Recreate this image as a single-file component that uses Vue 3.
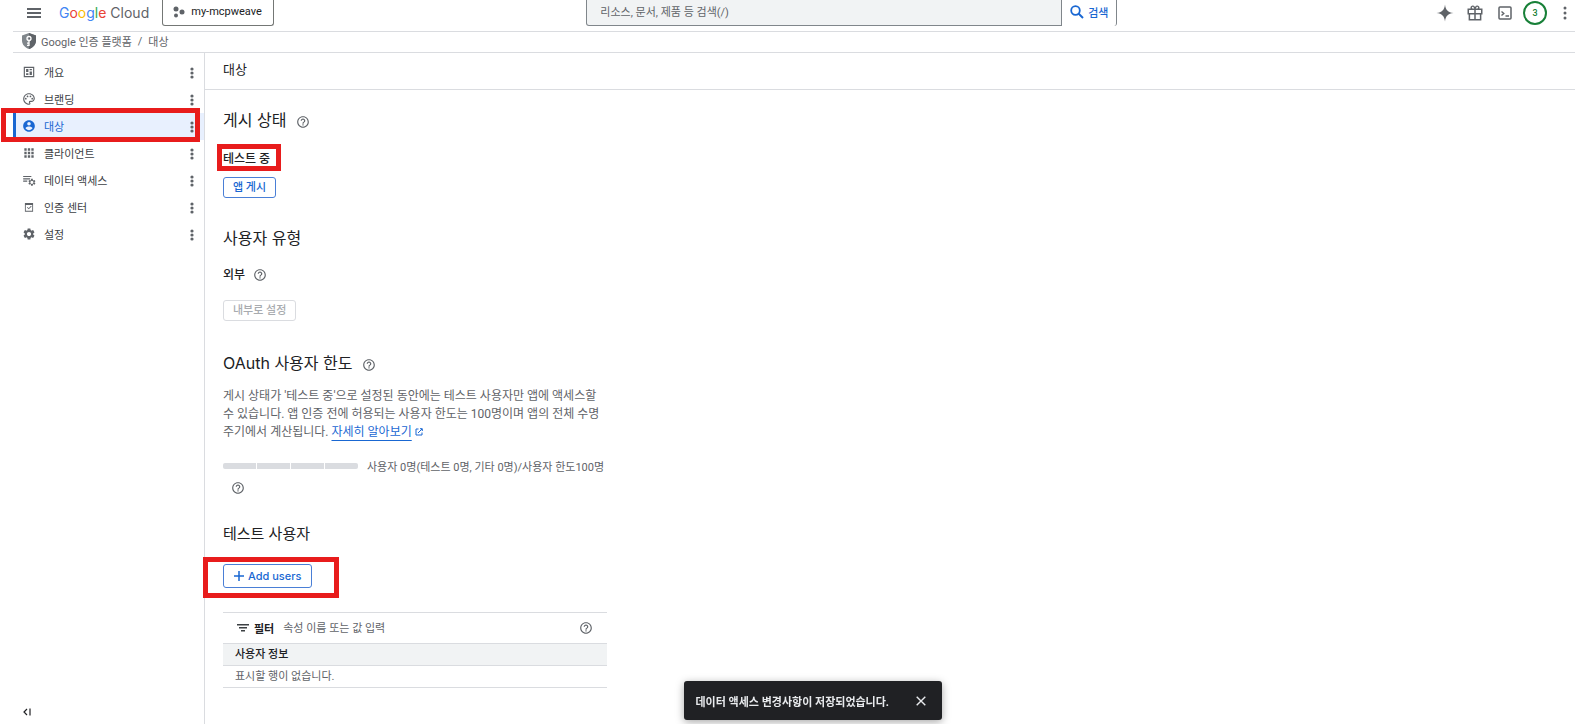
<script setup>
import { ref } from 'vue'

const search = ref('')
const filter = ref('')
const showToast = ref(true)

const helpPath =
  'M11 18h2v-2h-2v2zm1-16C6.48 2 2 6.48 2 12s4.48 10 10 10 10-4.48 10-10S17.52 2 12 2zm0 18c-4.41 0-8-3.59-8-8s3.59-8 8-8 8 3.59 8 8-3.59 8-8 8zm0-14c-2.21 0-4 1.79-4 4h2c0-1.1.9-2 2-2s2 .9 2 2c0 2-3 1.75-3 5h2c0-2.25 3-2.5 3-5 0-2.21-1.79-4-4-4z'

const menu = [
  {
    label: '개요',
    icon: 'M3 3h18v18H3zM5 5v14h14V5zM7 7h4v5H7zM13 7h4v2h-4zM13 11h4v6h-4zM7 14h4v3H7z',
  },
  {
    label: '브랜딩',
    icon: 'M12 22C6.49 22 2 17.51 2 12S6.49 2 12 2s10 4.04 10 9c0 3.31-2.69 6-6 6h-1.77c-.28 0-.5.22-.5.5 0 .12.05.23.13.33.41.47.64 1.06.64 1.67A2.5 2.5 0 0112 22zm0-18c-4.41 0-8 3.59-8 8s3.59 8 8 8c.28 0 .5-.22.5-.5a.54.54 0 00-.14-.35c-.41-.46-.63-1.05-.63-1.65a2.5 2.5 0 012.5-2.5H16c2.21 0 4-1.79 4-4 0-3.86-3.59-7-8-7zM5 11.500a1.500 1.500 0 1 0 3 0a1.500 1.500 0 1 0-3 0zM8 7.500a1.500 1.500 0 1 0 3 0a1.500 1.500 0 1 0-3 0zM13 7.500a1.500 1.500 0 1 0 3 0a1.500 1.500 0 1 0-3 0zM16 11.500a1.500 1.500 0 1 0 3 0a1.500 1.500 0 1 0-3 0z',
  },
  {
    label: '대상',
    active: true,
    icon: 'M12 2C6.48 2 2 6.48 2 12s4.48 10 10 10 10-4.48 10-10S17.52 2 12 2zm0 3c1.66 0 3 1.34 3 3s-1.34 3-3 3-3-1.34-3-3 1.34-3 3-3zm0 14.200c-2.500 0-4.710-1.280-6-3.220.030-1.990 4-3.080 6-3.080 1.990 0 5.970 1.090 6 3.080-1.290 1.940-3.500 3.220-6 3.220z',
  },
  {
    label: '클라이언트',
    icon: 'M4 4h4v4H4zM10 4h4v4h-4zM16 4h4v4h-4zM4 10h4v4H4zM10 10h4v4h-4zM16 10h4v4h-4zM4 16h4v4H4zM10 16h4v4h-4zM16 16h4v4h-4z',
  },
  {
    label: '데이터 액세스',
    icon: 'M2 5h14v2H2zM2 9h12v2H2zM2 13h7v2H2zM15.500 10h3v2l1.500 1 1.700-1 1.300 2.300-1.500 1.200v1l1.500 1.200-1.300 2.300-1.700-1-1.500 1v2h-3v-2l-1.500-1-1.700 1-1.300-2.300 1.500-1.200v-1l-1.500-1.200 1.300-2.300 1.700 1 1.500-1zM17 13.300a2.700 2.700 0 1 0 0 5.400a2.700 2.700 0 1 0 0-5.400z',
  },
  {
    label: '인증 센터',
    icon: 'M5 5h14v15H5zM6.500 8.500v10h11v-10zM8.500 13l1-1 2 2 4-4 1 1-5 5z',
  },
  {
    label: '설정',
    icon: 'M19.140 12.940c.040-.300.060-.610.060-.940 0-.320-.020-.640-.070-.940l2.030-1.580c.180-.140.230-.410.120-.610l-1.920-3.320c-.120-.220-.370-.290-.590-.220l-2.390.960c-.500-.380-1.030-.700-1.620-.940l-.360-2.540c-.040-.240-.240-.410-.480-.410h-3.840c-.240 0-.430.170-.470.410l-.360 2.540c-.590.240-1.130.570-1.620.940l-2.390-.960c-.220-.080-.470 0-.590.220L2.740 8.870c-.120.210-.080.470.120.610l2.030 1.580c-.050.300-.090.630-.090.940s.020.640.070.940l-2.030 1.580c-.180.140-.230.410-.120.610l1.920 3.320c.120.220.370.290.590.220l2.390-.960c.500.380 1.030.700 1.620.940l.360 2.540c.050.240.240.410.480.410h3.840c.240 0 .440-.170.470-.410l.360-2.540c.590-.240 1.130-.560 1.620-.940l2.390.960c.220.080.470 0 .590-.220l1.920-3.320c.120-.220.070-.470-.120-.610l-2.010-1.580zM12 15.600c-1.980 0-3.600-1.620-3.600-3.600s1.620-3.600 3.600-3.600 3.600 1.620 3.600 3.600-1.620 3.600-3.600 3.600z',
  },
]
</script>

<template>
  <div class="console">
    <header class="topbar">
      <div class="topbar-left">
        <button class="icon-btn" aria-label="탐색 메뉴">
          <svg width="14" height="10" viewBox="0 0 14 10"><path d="M0 0h14v2H0zM0 4h14v2H0zM0 8h14v2H0z" /></svg>
        </button>
        <a class="logo" href="#"><span class="b">G</span><span class="r">o</span><span class="y">o</span><span class="b">g</span><span class="g">l</span><span class="r">e</span> Cloud</a>
        <button class="project">
          <svg width="12" height="12" viewBox="0 0 12 12"><circle cx="3" cy="3" r="2.500" /><circle cx="9" cy="6" r="2.500" /><circle cx="3" cy="9.500" r="2" /></svg>
          my-mcpweave
        </button>
      </div>
      <form class="search" @submit.prevent>
        <input v-model="search" type="text" aria-label="검색어" placeholder="리소스, 문서, 제품 등 검색(/)" />
        <button type="submit">
          <svg width="14" height="14" viewBox="0 0 14 14"><circle cx="5.500" cy="5.500" r="4.300" fill="none" stroke="currentColor" stroke-width="1.800" /><path d="M8.500 8.500l4.500 4.500" stroke="currentColor" stroke-width="2" /></svg>
          검색
        </button>
      </form>
      <div class="topbar-right">
        <button class="tool" aria-label="Gemini">
          <svg width="18" height="18" viewBox="0 0 18 18"><path d="M9 .5c.6 5.500 3 7.900 8.500 8.500-5.500.6-7.900 3-8.500 8.500-.6-5.500-3-7.900-8.500-8.500 5.500-.6 7.900-3 8.500-8.500z" /></svg>
        </button>
        <button class="tool" aria-label="혜택">
          <svg width="18" height="18" viewBox="0 0 24 24"><path d="M20 6h-2.180c.110-.310.180-.650.180-1 0-1.660-1.340-3-3-3-1.050 0-1.960.540-2.500 1.350l-.500.670-.500-.680C10.960 2.540 10.050 2 9 2 7.340 2 6 3.340 6 5c0 .350.070.690.180 1H2v8h1.500v8h17v-8H22V6h-2zm-5-2.200c.660 0 1.200.540 1.200 1.200S15.660 6 15 6h-2l1-1.600c.2-.4.600-.6 1-.6zM9 3.800c.4 0 .8.200 1 .6L11 6H9c-.660 0-1.200-.340-1.200-1S8.340 3.800 9 3.800zM4 8h7v4H4zm1.500 6H11v6H5.500zm13 6H13v-6h5.500zM20 12h-7V8h7z" /></svg>
        </button>
        <button class="tool" aria-label="Cloud Shell">
          <svg width="14" height="14" viewBox="0 0 14 14"><rect x="1" y="1" width="12" height="12" rx="1" fill="none" stroke="currentColor" stroke-width="1.500" /><path d="M3.500 5.500l2.300 2-2.300 2M7.500 10H11" fill="none" stroke="currentColor" stroke-width="1.400" /></svg>
        </button>
        <button class="tool" aria-label="알림"><span class="badge">3</span></button>
        <button class="more" aria-label="더보기">
          <svg width="4" height="14" viewBox="0 0 4 14"><circle cx="2" cy="2" r="1.500" /><circle cx="2" cy="7" r="1.500" /><circle cx="2" cy="12" r="1.500" /></svg>
        </button>
      </div>
    </header>

    <nav class="crumbs" aria-label="이동 경로">
      <svg width="14" height="16" viewBox="0 0 14 16">
        <path d="M7 0l7 2.500v5C14 11.500 11 14.800 7 16 3 14.800 0 11.500 0 7.500v-5z" fill="#80868b" />
        <path d="M7 0l7 2.500v5C14 11.500 11 14.800 7 16z" fill="#5f6368" />
        <circle cx="7" cy="5.500" r="2" fill="none" stroke="#fff" stroke-width="1.300" />
        <path d="M7 7.500V13M7 10.200H5M7 12.300H5" stroke="#fff" stroke-width="1.300" />
      </svg>
      <a href="#">Google 인증 플랫폼</a>
      <span class="slash">/</span>
      <span>대상</span>
    </nav>

    <div class="body">
      <aside class="sidebar">
        <ul>
          <li v-for="item in menu" :key="item.label" :class="{ active: item.active }">
            <a href="#">
              <svg width="14" height="14" viewBox="0 0 24 24"><path fill-rule="evenodd" :d="item.icon" /></svg>
              {{ item.label }}
            </a>
            <button class="dots" :aria-label="item.label + ' 옵션'">
              <svg width="4" height="12" viewBox="0 0 4 12"><circle cx="2" cy="2" r="1.600" /><circle cx="2" cy="6" r="1.600" /><circle cx="2" cy="10" r="1.600" /></svg>
            </button>
            <span v-if="item.active" class="mark mark-menu"></span>
          </li>
        </ul>
        <button class="collapse" aria-label="메뉴 접기">
          <svg width="8" height="8" viewBox="0 0 8 8"><path d="M4 1L1 4l3 3M7 .5v7" fill="none" stroke="currentColor" stroke-width="1.200" /></svg>
        </button>
      </aside>

      <main>
        <h1>대상</h1>
        <div class="content">
          <section class="publish">
            <h2>게시 상태 <svg class="help" viewBox="0 0 24 24"><path :d="helpPath" /></svg></h2>
            <p class="status"><span class="marked">테스트 중<span class="mark mark-status"></span></span></p>
            <button class="btn">앱 게시</button>
          </section>

          <section class="user-type">
            <h2>사용자 유형</h2>
            <p class="status">외부 <svg class="help" viewBox="0 0 24 24"><path :d="helpPath" /></svg></p>
            <button class="btn" disabled>내부로 설정</button>
          </section>

          <section class="limit">
            <h2>OAuth 사용자 한도 <svg class="help" viewBox="0 0 24 24"><path :d="helpPath" /></svg></h2>
            <p class="desc">
              게시 상태가 '테스트 중'으로 설정된 동안에는 테스트 사용자만 앱에 액세스할 수 있습니다. 앱 인증 전에 허용되는 사용자 한도는 100명이며 앱의 전체 수명 주기에서 계산됩니다.
              <a href="#">자세히 알아보기</a><svg class="external" width="8" height="8" viewBox="0 0 8 8"><path d="M3.500 1H1v6h6V4.500M5 .7h2.300V3M7 1L3 5" fill="none" stroke="currentColor" /></svg>
            </p>
            <div class="quota">
              <div class="bar"><i v-for="n in 4" :key="n"></i></div>
              <span>사용자 0명(테스트 0명, 기타 0명)/사용자 한도100명</span>
            </div>
            <div class="quota-help"><svg class="help" viewBox="0 0 24 24"><path :d="helpPath" /></svg></div>
          </section>

          <section class="testers">
            <h3>테스트 사용자</h3>
            <div class="marked">
              <button class="btn add">
                <svg width="10" height="10" viewBox="0 0 10 10"><path d="M5 0v10M0 5h10" stroke="currentColor" stroke-width="1.500" /></svg>
                Add users
              </button>
              <span class="mark mark-add"></span>
            </div>
            <div class="filter">
              <svg width="12" height="8" viewBox="0 0 12 8"><path d="M0 0h12v1.500H0zM2 3h8v1.500H2zM4 6h4v1.500H4z" /></svg>
              <label for="filter">필터</label>
              <input id="filter" v-model="filter" type="text" placeholder="속성 이름 또는 값 입력" />
              <svg class="help" viewBox="0 0 24 24"><path :d="helpPath" /></svg>
            </div>
            <table>
              <thead>
                <tr><th>사용자 정보</th></tr>
              </thead>
              <tbody>
                <tr><td>표시할 행이 없습니다.</td></tr>
              </tbody>
            </table>
          </section>
        </div>
      </main>
    </div>

    <div v-if="showToast" class="toast" role="status">
      <span>데이터 액세스 변경사항이 저장되었습니다.</span>
      <button aria-label="닫기" @click="showToast = false">
        <svg width="10" height="10" viewBox="0 0 10 10"><path d="M.7.7l8.600 8.600M9.300.7L.7 9.300" stroke="currentColor" stroke-width="1.400" /></svg>
      </button>
    </div>
  </div>
</template>

<style>
body {
  margin: 0;
  background: #fff;
}
</style>

<style scoped>
.console {
  display: flex;
  flex-direction: column;
  box-sizing: border-box;
  min-height: 100vh;
  padding-left: 13px;
  font-family: Roboto, "Noto Sans CJK KR", sans-serif;
  font-size: 11px;
  color: #202124;
}

button,
input {
  font: inherit;
  margin: 0;
}
button {
  padding: 0;
  border: 0;
  background: none;
  color: inherit;
  cursor: pointer;
}
svg {
  display: block;
  flex: none;
  fill: currentColor;
}
h1,
h2,
h3,
p,
ul {
  margin: 0;
  padding: 0;
  font-weight: 400;
}

.topbar {
  display: flex;
  justify-content: space-between;
  align-items: flex-start;
  height: 31px;
  border-bottom: 1px solid #dadce0;
}
.topbar-left,
.topbar-right {
  display: flex;
  align-items: center;
  height: 26px;
  color: #5f6368;
}
.icon-btn {
  padding: 0 14px;
}
.logo {
  margin: 0 13px 0 4px;
  padding-bottom: 2px;
  font-family: Inter, sans-serif;
  font-size: 14px;
  color: #5f6368;
  text-decoration: none;
}
.b { color: #4285f4; }
.r { color: #ea4335; }
.y { color: #fbbc04; }
.g { color: #34a853; }
.project {
  display: flex;
  align-items: center;
  gap: 6px;
  box-sizing: border-box;
  height: 26px;
  padding: 0 11px 2px 10px;
  border: 1px solid #747775;
  border-top: 0;
  border-radius: 0 0 3px 3px;
  color: #202124;
}
.project svg {
  color: #5f6368;
}
.search {
  display: flex;
  width: 34%;
  height: 26px;
}
.search input {
  flex: 1;
  min-width: 0;
  box-sizing: border-box;
  padding: 0 13px;
  border: 1px solid #80868b;
  border-top: 0;
  border-radius: 0 0 0 3px;
  background: #f1f3f4;
  outline: none;
}
.search input::placeholder,
.filter input::placeholder {
  color: #5f6368;
  opacity: 1;
}
.search button {
  display: flex;
  align-items: center;
  gap: 4px;
  padding: 0 8px 2px;
  border-right: 1px solid #80868b;
  border-radius: 0 0 3px 0;
  color: #1967d2;
  font-weight: 500;
}
.tool {
  display: flex;
  justify-content: center;
  width: 30px;
}
.badge {
  box-sizing: border-box;
  width: 24px;
  height: 24px;
  border: 2px solid #188038;
  border-radius: 50%;
  color: #188038;
  font-size: 9px;
  font-weight: 500;
  line-height: 20px;
}
.more {
  display: flex;
  justify-content: center;
  width: 20px;
  margin-left: 5px;
}

.crumbs {
  display: flex;
  align-items: center;
  box-sizing: border-box;
  height: 21px;
  padding: 0 0 2px 9px;
  border-bottom: 1px solid #dadce0;
  color: #5f6368;
}
.crumbs a {
  margin-left: 5px;
  color: inherit;
  text-decoration: none;
}
.slash {
  margin: 0 6px;
}

.body {
  display: flex;
  flex: 1;
}
.sidebar {
  display: flex;
  flex-direction: column;
  justify-content: space-between;
  box-sizing: border-box;
  width: 192px;
  padding: 6px 0 8px;
  border-right: 1px solid #dadce0;
}
.sidebar ul {
  list-style: none;
}
.sidebar li {
  position: relative;
  display: flex;
  align-items: center;
  height: 27px;
  border-left: 3px solid transparent;
  color: #3c4043;
}
.sidebar li a {
  display: flex;
  flex: 1;
  align-items: center;
  gap: 8px;
  padding: 0 0 2px 6px;
  color: inherit;
  text-decoration: none;
}
.sidebar li svg {
  color: #5f6368;
}
.sidebar li.active {
  border-left-color: #1967d2;
  background: #e8f0fe;
}
.sidebar li.active a,
.sidebar li.active a svg {
  color: #1967d2;
}
.dots {
  padding: 0 10px;
}
.collapse {
  align-self: flex-start;
  margin-left: 10px;
}

main {
  flex: 1;
}
h1 {
  padding: 7px 18px 9px;
  border-bottom: 1px solid #dadce0;
  font-size: 13px;
  line-height: 20px;
}
.content {
  width: 384px;
  padding: 20px 18px;
}
h2,
h3 {
  display: flex;
  align-items: center;
  gap: 10px;
  font-family: Inter, "Noto Sans CJK KR", sans-serif;
  font-size: 16px;
  line-height: 20px;
}
h3 {
  font-size: 15px;
}
.help {
  width: 14px;
  height: 14px;
  color: #5f6368;
}
h2 .help {
  margin-top: 4px;
}
.status {
  display: flex;
  align-items: center;
  gap: 8px;
  margin: 17px 0 15px;
  font-size: 12px;
  font-weight: 500;
  line-height: 20px;
}
.btn {
  box-sizing: border-box;
  height: 21px;
  padding: 0 9px;
  border: 1px solid #4a7fd6;
  border-radius: 3px;
  color: #1967d2;
  font-weight: 500;
  line-height: 17px;
}
.btn:disabled {
  border-color: #dadce0;
  color: #a8abaf;
  cursor: default;
}
.publish .status {
  margin: 19px 0 8px;
}
.user-type {
  margin-top: 30px;
}
.limit {
  margin-top: 32px;
}
.desc {
  margin: 14px 0 15px;
  color: #5f6368;
  font-size: 12px;
  line-height: 18px;
}
.desc a {
  color: #1967d2;
  text-decoration: underline;
  text-underline-offset: 4px;
}
.external {
  display: inline-block;
  margin-left: 3px;
  color: #1967d2;
}
.quota {
  display: flex;
  align-items: center;
  gap: 9px;
  height: 20px;
  color: #5f6368;
}
.bar {
  display: flex;
  gap: 1px;
  width: 135px;
  height: 6px;
  border-radius: 2px;
  overflow: hidden;
}
.bar i {
  flex: 1;
  background: #dadce0;
}
.quota-help {
  padding: 5px 8px 3px;
}
.testers {
  margin-top: 26px;
}
.testers .marked {
  margin: 20px 0 24px;
}
.add {
  display: flex;
  align-items: center;
  gap: 4px;
  height: 24px;
  padding: 0 10px;
  font-family: Inter, sans-serif;
}
.filter {
  display: flex;
  align-items: center;
  height: 30px;
  padding: 0 14px;
  border-top: 1px solid #dadce0;
  border-bottom: 1px solid #dadce0;
}
.filter svg:first-child {
  color: #3c4043;
}
.filter label {
  margin: 0 9px 0 5px;
  font-weight: 700;
}
.filter input {
  flex: 1;
  min-width: 0;
  padding: 0;
  border: 0;
  outline: none;
}
table {
  width: 100%;
  border-collapse: separate;
  border-spacing: 0;
}
th,
td {
  height: 21px;
  padding: 0 12px;
  border-bottom: 1px solid #dadce0;
  line-height: 21px;
  text-align: left;
}
th {
  background: #f1f3f4;
  font-weight: 500;
}
td {
  color: #5f6368;
}

.marked {
  position: relative;
  width: fit-content;
}
.mark {
  position: absolute;
  border: 5px solid #e81c1c;
  pointer-events: none;
}
.mark-menu {
  inset: -5px 4px -2px -15px;
}
.mark-status {
  inset: -5px -11px -2px -6px;
}
.mark-add {
  inset: -7px -27px -10px -20px;
}

.toast {
  position: fixed;
  bottom: 4px;
  left: calc(50% - 104px);
  display: flex;
  align-items: center;
  justify-content: space-between;
  box-sizing: border-box;
  width: 258px;
  height: 39px;
  padding: 0 16px 0 12px;
  border-radius: 3px;
  background: #202124;
  box-shadow: 0 2px 8px rgba(0, 0, 0, 0.35);
  color: #e8eaed;
  font-weight: 700;
}
</style>
